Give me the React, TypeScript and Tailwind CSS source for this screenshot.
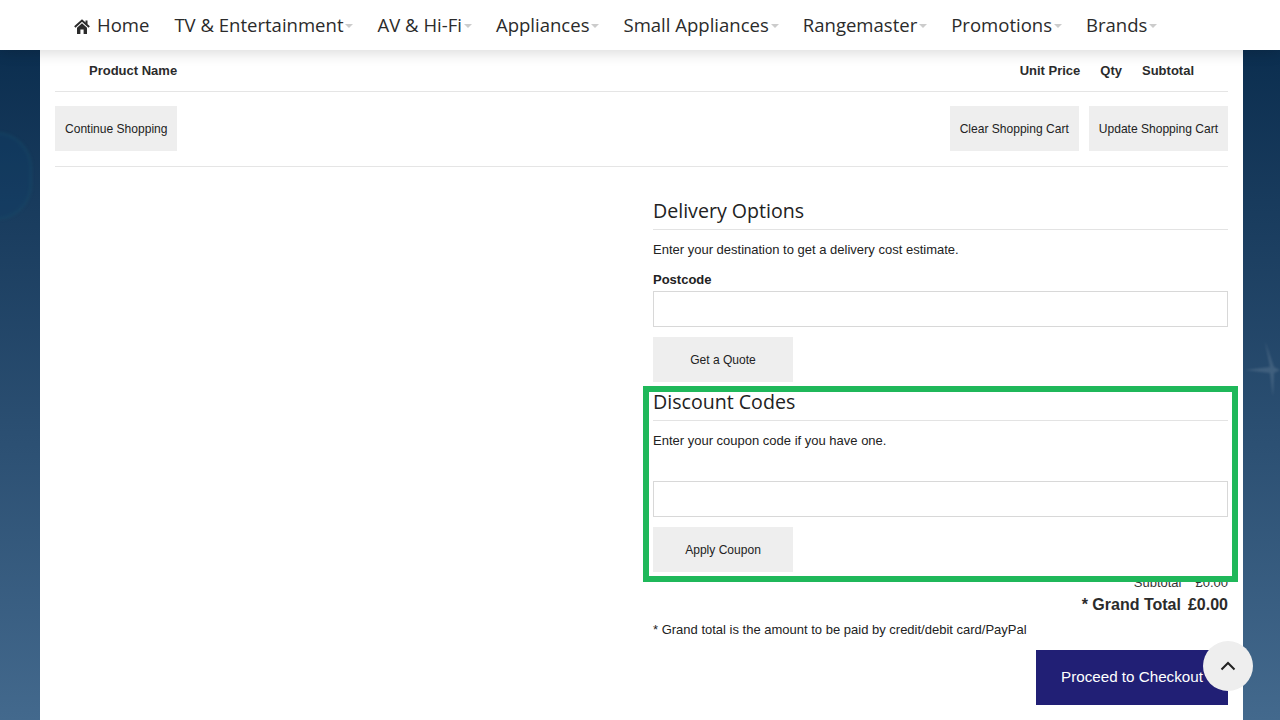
const NAV_ITEMS = [
  "TV & Entertainment",
  "AV & Hi-Fi",
  "Appliances",
  "Small Appliances",
  "Rangemaster",
  "Promotions",
  "Brands",
];

function GreyButton({ label, wide }: { label: string; wide?: boolean }) {
  return (
    <button
      className={`h-[45px] bg-[#eeeeee] pt-[1px] text-[12.05px] text-[#222] ${wide ? "w-[140px]" : "px-[10px]"}`}
    >
      {label}
    </button>
  );
}

function Heading({ text }: { text: string }) {
  return (
    <h2 className="h-[38px] border-b border-[#e3e3e3] font-['Open_Sans',sans-serif] text-[19.6px] leading-[38px] text-[#222]">
      {text}
    </h2>
  );
}

function HomeIcon() {
  return (
    <svg className="mt-[3px]" width="16" height="15" viewBox="0 0 16 15" fill="#2b2b2b">
      <path d="M0.8 8 L8 1.5 L15.2 8" fill="none" stroke="#2b2b2b" strokeWidth="2" />
      <rect x="11.5" y="1.5" width="2" height="3.5" />
      <path d="M3 8.8 L8 4.3 L13 8.8 V15 H9.6 V10.6 H6.4 V15 H3 Z" />
    </svg>
  );
}

function Navbar() {
  return (
    <nav className="absolute top-0 left-0 z-10 flex h-[50px] w-full items-center gap-[24px] bg-white pl-[74px] font-['Open_Sans',sans-serif] text-[18.55px] text-[#2b2b2b] shadow-[0_2px_14px_rgba(0,0,0,0.16)]">
      <span className="mr-[1px] flex items-center gap-[7px]">
        <HomeIcon />
        Home
      </span>
      {NAV_ITEMS.map((item) => (
        <span key={item} className="flex items-center gap-[2px]">
          {item}
          <span className="mt-[2px] h-0 w-0 border-x-[4px] border-t-[4px] border-x-transparent border-t-[#cccccc]" />
        </span>
      ))}
    </nav>
  );
}

export default function App() {
  return (
    <div className="relative h-[720px] w-[1280px] overflow-hidden bg-gradient-to-b from-[#072a4b] to-[#43698d] font-['Liberation_Sans',Arial,sans-serif]">
      {/* background decorations */}
      <div className="absolute top-[132px] left-[-40px] h-[88px] w-[72px] rounded-full border-2 border-[#1f5f6e]/25 bg-[#0e3f6b]/30 blur-[1.5px]" />
      <svg className="absolute top-[335px] left-[1243px] blur-[1px]" width="37" height="70" viewBox="0 0 37 70">
        <path d="M22 6 L31 32 L37 35 L31 38 L30 62 L27 38 L2 35 L27 32 Z" fill="#ffffff" opacity="0.12" />
      </svg>

      <Navbar />

      <main className="ml-[40px] h-full w-[1203px] bg-white px-[15px] pt-[50px] text-[#222]">
        <div className="flex h-[42px] items-center border-b border-[#e5e5e5] pl-[34px] text-[13px] font-bold text-[#2b2b2b]">
          <span className="flex-1">Product Name</span>
          <span>Unit Price</span>
          <span className="ml-[20px]">Qty</span>
          <span className="mr-[34px] ml-[20px]">Subtotal</span>
        </div>

        <div className="flex h-[75px] items-start gap-[10px] border-b border-[#e5e5e5] pt-[14px]">
          <GreyButton label="Continue Shopping" />
          <span className="flex-1" />
          <GreyButton label="Clear Shopping Cart" />
          <GreyButton label="Update Shopping Cart" />
        </div>

        <div className="flex justify-end">
          <div className="w-[575px] pt-[25px] text-[13px]">
            <Heading text="Delivery Options" />
            <p className="mt-[11px] leading-[18px]">Enter your destination to get a delivery cost estimate.</p>
            <label className="mt-[12px] block leading-[18px] font-bold">Postcode</label>
            <input className="mt-[2px] block h-[36px] w-full border border-[#d8d8d8]" />
            <div className="mt-[10px] h-[45px]">
              <GreyButton label="Get a Quote" wide />
            </div>

            <section className="relative z-[1] bg-white pt-[1px]">
              <Heading text="Discount Codes" />
              <p className="mt-[11px] leading-[18px]">Enter your coupon code if you have one.</p>
              <input className="mt-[31px] block h-[36px] w-full border border-[#d8d8d8]" />
              <div className="mt-[10px] h-[45px]">
                <GreyButton label="Apply Coupon" wide />
              </div>
              <div className="absolute top-[4px] right-[-10px] bottom-[-10px] left-[-10px] border-[6px] border-[#1fb85a]" />
            </section>

            <div className="mt-[3px] flex justify-end gap-[14px] leading-[16px] text-[#333]">
              <span>Subtotal</span>
              <span>£0.00</span>
            </div>
            <div className="mt-[4px] flex justify-end gap-[7px] text-[16px] leading-[20px] font-bold text-[#2b2b2b]">
              <span>* Grand Total</span>
              <span>£0.00</span>
            </div>
            <p className="mt-[6px] leading-[18px]">* Grand total is the amount to be paid by credit/debit card/PayPal</p>
            <div className="mt-[11px] flex justify-end">
              <button className="h-[55px] w-[192px] bg-[#211f75] text-[15.2px] text-white">Proceed to Checkout</button>
            </div>
          </div>
        </div>
      </main>

      <button className="absolute top-[641px] left-[1203px] z-20 flex h-[50px] w-[50px] items-center justify-center rounded-full bg-[#eeeeee]">
        <svg width="16" height="10" viewBox="0 0 16 10" fill="none" stroke="#222" strokeWidth="2">
          <path d="M1.5 8.5 L8 2 L14.5 8.5" />
        </svg>
      </button>
    </div>
  );
}
